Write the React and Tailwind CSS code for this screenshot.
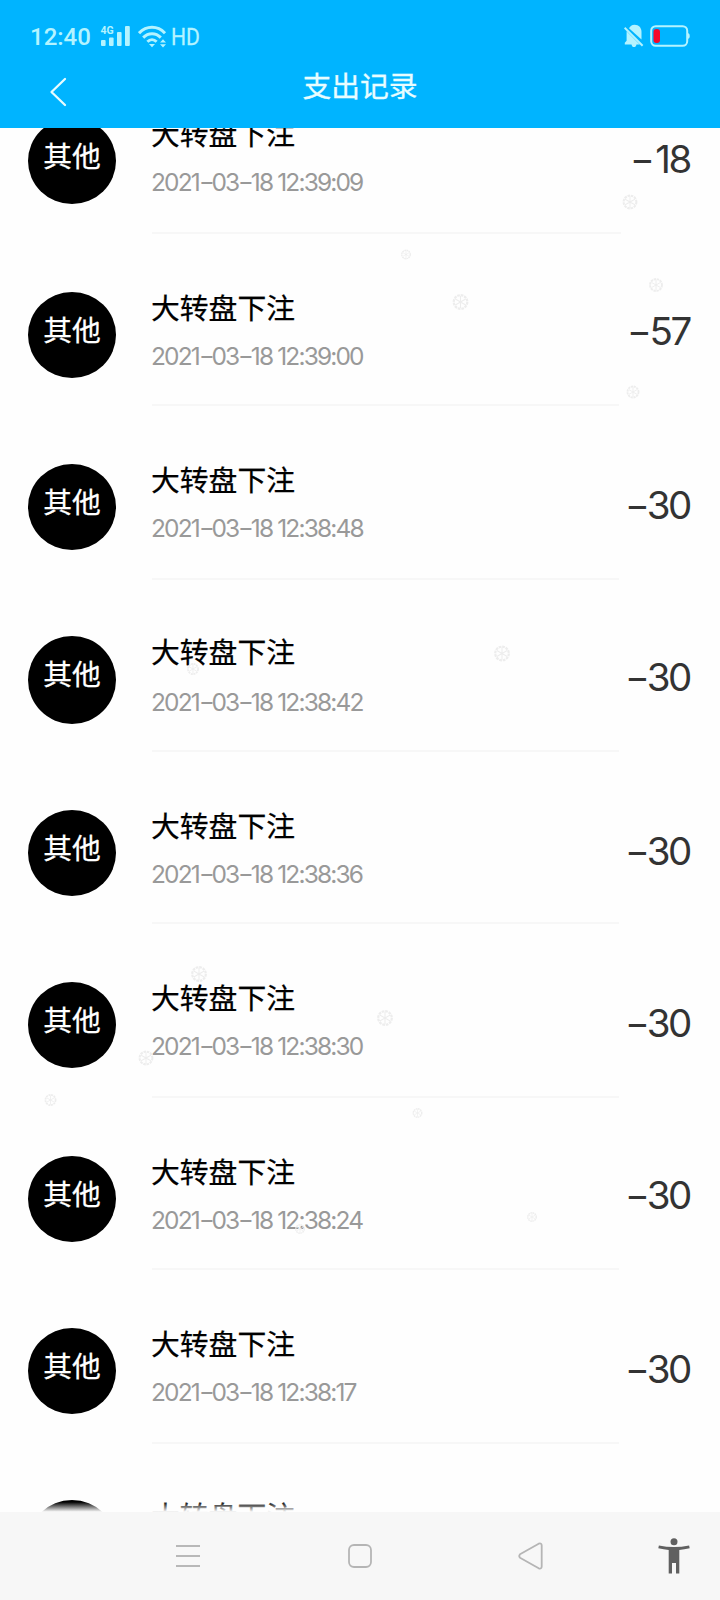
const records = [
  { time: "2021-03-18 12:39:09", amount: "-18", dash: "w-[25px]", row: "h-[174px]", dot: "h-[86px]", body: "h-[116px] w-[469px]", gap: "pt-[19px]", amt: "pt-[19px]" },
  { time: "2021-03-18 12:39:00", amount: "-57", dash: "w-[23px]", row: "h-[172px]", dot: "h-[86px]", body: "h-[114px] w-[467px]", gap: "pt-[19px]", amt: "pt-[17px]" },
  { time: "2021-03-18 12:38:48", amount: "-30", dash: "w-[22px]", row: "h-[172px]", dot: "h-[86px]", body: "h-[116px] w-[467px]", gap: "pt-[19px]", amt: "pt-[19px]" },
  { time: "2021-03-18 12:38:42", amount: "-30", dash: "w-[22px]", row: "h-[174px]", dot: "h-[88px]", body: "h-[116px] w-[467px]", gap: "pt-[21px]", amt: "pt-[19px]" },
  { time: "2021-03-18 12:38:36", amount: "-30", dash: "w-[22px]", row: "h-[172px]", dot: "h-[86px]", body: "h-[114px] w-[467px]", gap: "pt-[19px]", amt: "pt-[19px]" },
  { time: "2021-03-18 12:38:30", amount: "-30", dash: "w-[22px]", row: "h-[174px]", dot: "h-[86px]", body: "h-[116px] w-[467px]", gap: "pt-[19px]", amt: "pt-[19px]" },
  { time: "2021-03-18 12:38:24", amount: "-30", dash: "w-[22px]", row: "h-[172px]", dot: "h-[86px]", body: "h-[114px] w-[467px]", gap: "pt-[19px]", amt: "pt-[17px]" },
  { time: "2021-03-18 12:38:17", amount: "-30", dash: "w-[22px]", row: "h-[172px]", dot: "h-[86px]", body: "h-[116px] w-[467px]", gap: "pt-[19px]", amt: "pt-[19px]" },
  { time: "", amount: "", dash: "w-[22px]", row: "h-[172px]", dot: "h-[86px]", body: "h-[116px] w-[467px]", gap: "pt-[19px]", amt: "pt-[19px]" },
];

// Falling snow: centre x, centre y, radius
const flakes = [
  [630, 202, 7.5], [406, 254.5, 5], [460.5, 302, 8], [656, 285, 7], [633, 392, 6.5],
  [502, 653.5, 8], [193, 669, 6], [199, 974, 8], [385, 1018, 8], [146, 1058, 7.5],
  [50.5, 1100, 6], [417.5, 1113, 5], [532, 1217, 5], [300, 1229, 5],
];

function StatusBar() {
  return (
    <div className="flex h-[72px] items-center justify-between pl-[30px] pr-[30px] text-[#b4f3ff]">
      <div className="flex items-center">
        <span className="w-[62px] pt-px font-['Roboto',sans-serif] text-[24px] font-medium leading-[28px]">12:40</span>
        <svg className="ml-[8px] h-[22px] w-[31px]" viewBox="0 0 31 22" fill="currentColor">
          <text x="0.5" y="9" fontFamily="Roboto, sans-serif" fontSize="10.5" fontWeight="700">4G</text>
          <rect x="1" y="15" width="4.6" height="6" rx="1" />
          <rect x="9" y="12.5" width="4.6" height="8.5" rx="1" />
          <rect x="17" y="7" width="4.6" height="14" rx="1" />
          <rect x="25" y="1" width="4.8" height="20" rx="1" />
        </svg>
        <svg className="ml-[7px] h-[23px] w-[29px]" viewBox="0 0 29 23" fill="none" stroke="currentColor" strokeWidth="3">
          <path d="M1 8.2C8.5 .3 19.5 .3 27 8.2" />
          <path d="M5.2 12.6C10.3 7.5 17.7 7.5 22.8 12.6" />
          <path d="M9.4 16.8C12.2 14 15.8 14 18.6 16.8" />
          <path d="M11 19h6L14 22.3z" fill="currentColor" stroke="none" />
          <path d="M22 17.6L25 14.3L28 17.6zM22 19.2L25 22.5L28 19.2z" fill="currentColor" stroke="none" />
        </svg>
        <span className="ml-[4px] origin-left scale-x-[0.88] pt-px font-['Roboto',sans-serif] text-[24px] leading-[28px] [-webkit-text-stroke:0.3px_#b4f3ff]">HD</span>
      </div>
      <div className="flex items-center">
        <svg className="h-[24px] w-[20px]" viewBox="0 0 20 24" fill="currentColor">
          <path d="M2.6 7.2L15.8 20.4H12.5C12.2 22 11.3 23 10 23S7.8 22 7.5 20.4H.8V18.8L2.6 16.8z" />
          <path d="M5 4.2C6 2.4 7.8 1 10.5 .8C15 .8 17.5 4 17.5 8V15.5z" />
          <path d="M.6 3.8L18.6 21.8" stroke="currentColor" strokeWidth="2" />
        </svg>
        <svg className="ml-[6px] h-[22px] w-[40px]" viewBox="0 0 40 22" fill="none">
          <rect x="1.2" y="1.2" width="36" height="19.6" rx="4.5" stroke="currentColor" strokeWidth="2" />
          <path d="M38 8.2C40.3 8.2 40.3 13.8 38 13.8z" fill="currentColor" />
          <rect x="3.5" y="4" width="6.5" height="14" rx="3" fill="#f5082c" />
        </svg>
      </div>
    </div>
  );
}

function Flake({ x, y, r }) {
  return (
    <g transform={`translate(${x} ${y}) scale(${r / 8})`} stroke="#ededed" fill="none">
      <circle r="6.8" strokeWidth="2.2" strokeDasharray="2.7 0.86" />
      <path d="M0-6V6M-5.2-3L5.2 3M5.2-3L-5.2 3" strokeWidth="1.1" />
    </g>
  );
}

// Digits with every hyphen widened to a full-width dash stroke
function Dashed({ text, dash }) {
  return text.split(/(-)/).map((part, i) =>
    part === "-" ? (
      <span key={i} className={`inline-block origin-left scale-x-[1.4] text-left ${dash}`}>-</span>
    ) : (
      part
    )
  );
}

function Record({ item }) {
  return (
    <li className={`flex shrink-0 items-start pl-[28px] ${item.row}`}>
      <div className={`w-[88px] shrink-0 rounded-[50%] bg-black pt-[17px] text-center text-[28.8px] leading-[40px] text-white [-webkit-text-stroke:0.25px_#fff] ${item.dot}`}>其他</div>
      <div className={`ml-[36px] shrink-0 border-b-2 border-[#f7f7f7] ${item.body}`}>
        <div className="-ml-px -mt-[3px] text-[28.8px] leading-[36px] text-black [-webkit-text-stroke:0.25px_#000]">大转盘下注</div>
        <div className={`-ml-px whitespace-nowrap font-['Inter',sans-serif] text-[24.5px] leading-[24px] tracking-[-1.85px] text-[#999] ${item.gap}`}>
          <Dashed text={item.time} dash="w-[12.5px]" />
        </div>
      </div>
      <div className={`flex-1 whitespace-nowrap pr-[30px] text-right font-['Inter',sans-serif] text-[38.5px] leading-[44px] tracking-[-2.4px] text-[#333] ${item.amt}`}>
        <Dashed text={item.amount} dash={item.dash} />
      </div>
    </li>
  );
}

export default function App() {
  return (
    <div className="relative flex h-[1600px] w-[720px] flex-col overflow-hidden bg-[#fefefe] font-['Noto_Sans_CJK_SC',sans-serif]">
      <header className="h-[128px] shrink-0 bg-[#00b4ff]">
        <StatusBar />
        <div className="grid h-[56px] grid-cols-[120px_1fr_120px]">
          <svg className="ml-[49px] mt-[4px] h-[32px] w-[20px]" viewBox="0 0 20 32" fill="none" stroke="#e8fcff" strokeWidth="2.3" strokeLinecap="round" strokeLinejoin="round">
            <path d="M16 3L2.5 16L16 29" />
          </svg>
          <h1 className="-mt-[7px] text-center text-[28.8px] leading-[40px] text-[#e8fdff] [-webkit-text-stroke:0.3px_#e8fdff]">支出记录</h1>
        </div>
      </header>
      <main className="relative h-[1384px] shrink-0 overflow-hidden">
        <ul className="-mt-[10px] flex flex-col">
          {records.map((item, i) => <Record key={i} item={item} />)}
        </ul>
        <div className="absolute inset-x-0 bottom-0 h-[10px] bg-gradient-to-b from-transparent to-[#fefefe]" />
      </main>
      <nav className="grid h-[88px] shrink-0 grid-cols-[376px_344px] bg-[#f7f7f7]">
        <div className="flex items-center justify-between pl-[176px] pr-[4px]">
          <svg className="h-[24px] w-[24px]" viewBox="0 0 24 24" stroke="#b8b8b8" strokeWidth="2">
            <path d="M0 2H24M0 12H24M0 22H24" />
          </svg>
          <svg className="h-[24px] w-[24px]" viewBox="0 0 24 24" fill="none" stroke="#b5b5b5" strokeWidth="1.8">
            <rect x="1" y="1" width="22" height="22" rx="5" />
          </svg>
        </div>
        <div className="flex items-center pl-[142px]">
          <svg className="h-[28px] w-[26px] shrink-0" viewBox="0 0 26 28" fill="none" stroke="#b5b5b5" strokeWidth="1.8" strokeLinejoin="round">
            <path d="M2 12.3L20.7 1.7Q23.7 .8 23.7 3.5V24.5Q23.7 27.2 20.7 26.3L2 15.7Q.5 14 2 12.3Z" />
          </svg>
          <svg className="ml-[114px] h-[36px] w-[32px] shrink-0" viewBox="0 0 32 36" fill="#606060">
            <circle cx="16" cy="3.8" r="3.5" />
            <path d="M.9 7.5Q16 10.5 31.1 7.5L31.7 10.3Q26 11.6 21.3 12V35.5H18V25H14V35.5H10.7V12Q6 11.6 .3 10.3Z" />
          </svg>
        </div>
      </nav>
      <svg className="pointer-events-none absolute inset-0 h-[1600px] w-[720px]" viewBox="0 0 720 1600">
        {flakes.map(([x, y, r]) => <Flake key={`${x}-${y}`} x={x} y={y} r={r} />)}
      </svg>
    </div>
  );
}
